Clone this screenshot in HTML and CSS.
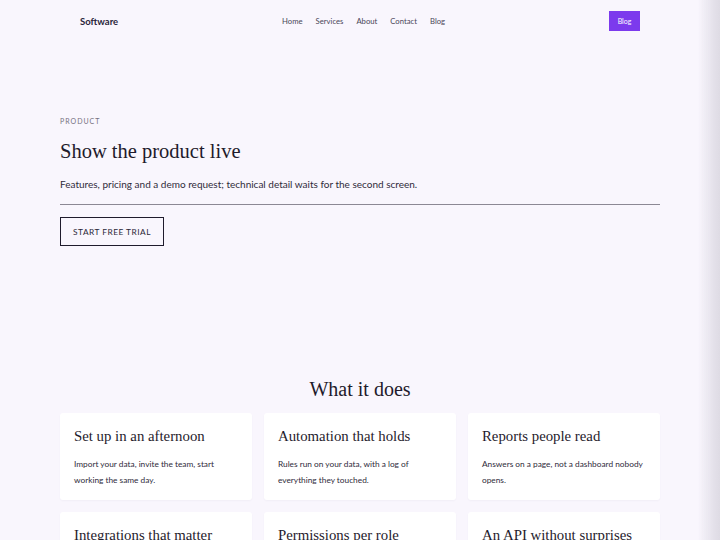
FILE: index.html
```html
<!DOCTYPE html>
<html lang="en">
<head>
<meta charset="utf-8">
<title>Software</title>
<link rel="stylesheet" href="styles.css">
</head>
<body>
<div class="edge"></div>
<header class="nav">
  <div class="logo">Software</div>
  <nav class="links">
    <a href="#">Home</a>
    <a href="#">Services</a>
    <a href="#">About</a>
    <a href="#">Contact</a>
    <a href="#">Blog</a>
  </nav>
  <a class="cta" href="#">Blog</a>
</header>
<main>
  <section class="hero">
    <div class="eyebrow">PRODUCT</div>
    <h1 class="title">Show the product live</h1>
    <p class="lead">Features, pricing and a demo request; technical detail waits for the second screen.</p>
    <hr class="rule">
    <a class="btn" href="#">START FREE TRIAL</a>
  </section>
  <section class="features">
    <h2 class="section-title">What it does</h2>
    <div class="grid">
      <div class="card"><h3>Set up in an afternoon</h3><p>Import your data, invite the team, start working the same day.</p></div>
      <div class="card"><h3>Automation that holds</h3><p>Rules run on your data, with a log of everything they touched.</p></div>
      <div class="card"><h3>Reports people read</h3><p>Answers on a page, not a dashboard nobody opens.</p></div>
      <div class="card"><h3>Integrations that matter</h3><p>Connect the tools you already use, without glue code.</p></div>
      <div class="card"><h3>Permissions per role</h3><p>Everyone sees what they need and nothing more.</p></div>
      <div class="card"><h3>An API without surprises</h3><p>Documented endpoints that behave the way they say.</p></div>
    </div>
  </section>
</main>
</body>
</html>
```
FILE: styles.css
```css
html, body { margin: 0; padding: 0; }
body {
  background: #f9f6fd;
  font-family: Lato, "Noto Sans", sans-serif;
  color: #2b2738;
}
.edge {
  position: fixed;
  top: 0; right: 0; bottom: 0;
  width: 22px;
  background: linear-gradient(to right, rgba(230,226,236,0), #e4e1ea 70%, #dedbe4);
  pointer-events: none;
  z-index: 10;
}
a { text-decoration: none; color: inherit; }
.nav {
  height: 42px;
  padding: 0 80px;
  display: flex;
  align-items: center;
  justify-content: space-between;
}
.logo { font-size: 9.5px; font-weight: 700; color: #29243a; }
.links { display: flex; gap: 13px; font-size: 7.7px; color: #4a4658; }
.cta {
  width: 31px; height: 20px;
  display: flex; align-items: center; justify-content: center;
  background: #7c3aed; color: #fff; font-size: 7px;
}
main { width: 600px; margin: 0 auto; }
.hero { padding-top: 74px; }
.eyebrow { font-size: 7px; letter-spacing: 1px; color: #77727f; line-height: 10px; }
.title {
  font-family: "Liberation Serif", serif;
  font-weight: 400; font-size: 20.5px; line-height: 24px;
  margin: 13px 0 0; color: #1f1b2c;
}
.lead { font-size: 10px; line-height: 14px; margin: 14px 0 0; color: #2f2b3a; }
.rule { border: 0; border-top: 1px solid #8c8894; margin: 13px 0 0; }
.btn {
  display: inline-flex; align-items: center; justify-content: center;
  margin-top: 12px;
  width: 102px; height: 27px;
  border: 1px solid #1f1b2c;
  font-size: 8.3px; letter-spacing: 0.5px; color: #2b2738;
}
.features { padding-top: 131px; }
.section-title {
  font-family: "Liberation Serif", serif;
  font-weight: 400; font-size: 20px; line-height: 24px;
  text-align: center; margin: 0 0 12px; color: #1f1b2c;
}
.grid { display: grid; grid-template-columns: repeat(3, 1fr); gap: 12px; }
.card {
  background: #fff; border-radius: 3px;
  padding: 13px 14px 12px;
  box-shadow: 0 1px 2px rgba(60,40,100,0.04);
}
.card h3 {
  font-family: "Liberation Serif", serif;
  font-weight: 400; font-size: 14.8px; line-height: 20px;
  margin: 0; color: #1f1b2c;
}
.card p { font-size: 8.3px; line-height: 16px; margin: 10px 0 0; color: #2f2b3a; }
```
